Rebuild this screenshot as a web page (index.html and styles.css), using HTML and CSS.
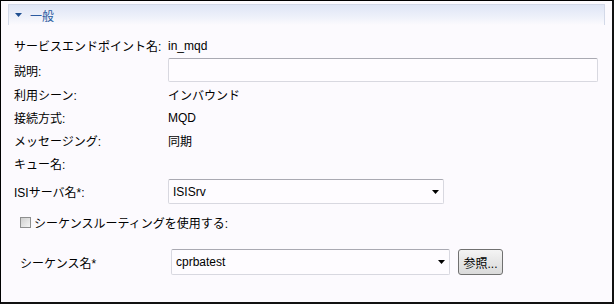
FILE: index.html
```html
<!DOCTYPE html>
<html lang="ja">
<head>
<meta charset="UTF-8">
<title>一般</title>
<link rel="stylesheet" href="styles.css">
</head>
<body>

<div class="frame">
    <div class="section-head">
        <svg class="twisty" width="7" height="4" viewBox="0 0 7 4"><path d="M0 0H7L3.5 4Z" fill="#1f4f91"/></svg>
        <span>一般</span>
    </div>

    <div class="form">
        <label>サービスエンドポイント名:</label>
        <span>in_mqd</span>

        <label>説明:</label>
        <div class="text-input"></div>

        <label>利用シーン:</label>
        <span>インバウンド</span>

        <label>接続方式:</label>
        <span>MQD</span>

        <label>メッセージング:</label>
        <span>同期</span>

        <label>キュー名:</label>
        <span></span>

        <label>ISIサーバ名*:</label>
        <div class="combo isi">
            <span>ISISrv</span>
            <svg width="7" height="4" viewBox="0 0 7 4"><path d="M0 0H7L3.5 4Z" fill="#000"/></svg>
        </div>
    </div>

    <div class="check-row">
        <span class="checkbox"></span>
        <span>シーケンスルーティングを使用する:</span>
    </div>

    <div class="seq-row">
        <label>シーケンス名*</label>
        <div class="combo seq">
            <span>cprbatest</span>
            <svg width="7" height="4" viewBox="0 0 7 4"><path d="M0 0H7L3.5 4Z" fill="#000"/></svg>
        </div>
        <button class="browse">参照...</button>
    </div>
</div>

</body>
</html>
```

FILE: styles.css
```css
body {
    margin: 0;
    padding: 0;
    font-family: "Liberation Sans", "Noto Sans CJK JP", sans-serif;
    font-size: 12px;
    color: #000;
}
.frame {
    width: 614px;
    height: 304px;
    box-sizing: border-box;
    border-top: 1px solid #000;
    border-left: 1px solid #000;
    border-right: 2px solid #111;
    border-bottom: 2px solid #111;
    background-color: #fcfafe;
    overflow: hidden;
}
.section-head {
    margin: 3px 7px 0 7px;
    height: 21px;
    box-sizing: border-box;
    border: 1px solid #d3d9e8;
    border-bottom: none;
    background: linear-gradient(#dfe5f5, #eef1fa 60%, #fcfafe);
    display: flex;
    align-items: center;
    padding-left: 6px;
    color: #2b5aa0;
}
.twisty {
    margin-right: 8px;
}
.form {
    display: grid;
    grid-template-columns: 154px 1fr;
    grid-template-rows: 23px 26px 23px 23px 23px 23px 33px;
    align-items: center;
    margin-top: 9px;
    padding: 0 14px 0 13px;
}
.text-input {
    height: 24px;
    box-sizing: border-box;
    border: 1px solid #d8d8e0;
    border-top-color: #a9a9b2;
    border-radius: 2px;
    background-color: #fefcff;
}
.combo {
    height: 25px;
    box-sizing: border-box;
    border: 1px solid #d8d8e0;
    border-top-color: #a9a9b2;
    border-radius: 2px;
    background-color: #fefcff;
    display: flex;
    align-items: center;
    justify-content: space-between;
    padding: 0 4px 0 4px;
}
.combo.isi {
    width: 276px;
}
.combo.seq {
    width: 279px;
    height: 26px;
}
.check-row {
    display: flex;
    align-items: center;
    height: 22px;
    margin-top: 3px;
    padding-left: 19px;
}
.checkbox {
    width: 11px;
    height: 11px;
    box-sizing: border-box;
    border: 1px solid #8e8f8f;
    background: linear-gradient(135deg, #cfcfcf, #f4f4f4);
    margin-right: 3px;
}
.seq-row {
    display: flex;
    align-items: center;
    margin-top: 16px;
    padding-left: 19px;
}
.seq-row label {
    width: 151px;
}
.browse {
    margin-left: 8px;
    width: 45px;
    height: 26px;
    padding: 0;
    font-family: "Liberation Sans", "Noto Sans CJK JP", sans-serif;
    font-size: 12px;
    color: #000;
    border: 1px solid #707070;
    border-radius: 3px;
    background: linear-gradient(#f4f4f4, #e6e6e6 50%, #dadada);
}
```
